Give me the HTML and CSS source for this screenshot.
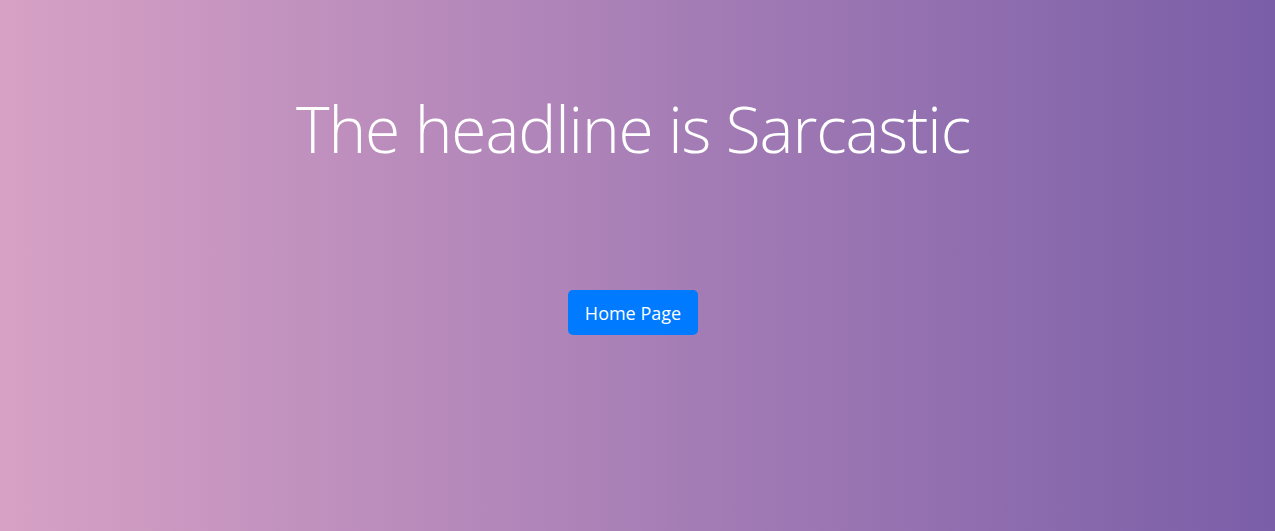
FILE: index.html
```html
<!DOCTYPE html>
<html lang="en">
<head>
<meta charset="utf-8">
<title>Sarcastic</title>
<link rel="stylesheet" href="styles.css">
</head>
<body>
<main class="hero">
  <h1 class="headline">The headline is Sarcastic</h1>
  <a class="btn-home" href="#">Home Page</a>
</main>
</body>
</html>
```
FILE: styles.css
```css
html, body {
  margin: 0;
  padding: 0;
  height: 100%;
}
body {
  background: linear-gradient(to right, #d7a1c5, #7a5ea8);
  font-family: "Open Sans", "Noto Sans", sans-serif;
}
.hero {
  display: flex;
  flex-direction: column;
  align-items: center;
  padding-top: 86px;
  padding-right: 9px;
}
.headline {
  margin: 0;
  font-weight: 300;
  font-size: 64px;
  line-height: 86px;
  letter-spacing: -1.1px;
  font-variant-ligatures: none;
  color: #ffffff;
}
.btn-home {
  margin-top: 118px;
  display: flex;
  align-items: center;
  justify-content: center;
  width: 130px;
  height: 45px;
  box-sizing: border-box;
  background: #007bff;
  color: #ffffff;
  border-radius: 5px;
  font-size: 18px;
  text-decoration: none;
}
```
